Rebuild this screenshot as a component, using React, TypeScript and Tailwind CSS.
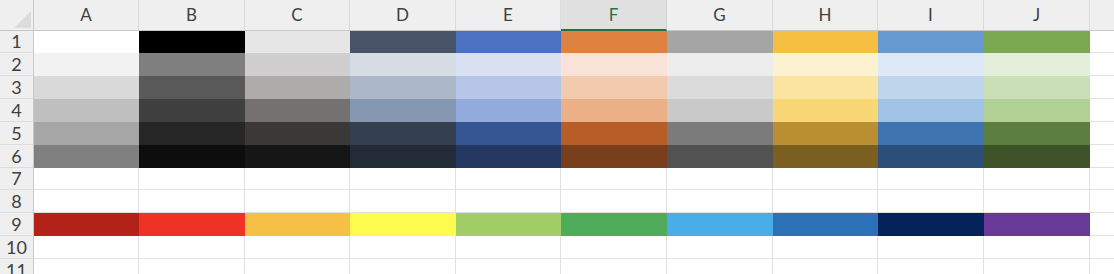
import React from 'react';

const columns = ['A', 'B', 'C', 'D', 'E', 'F', 'G', 'H', 'I', 'J'];
const rowHeights = ['h-[22px]', 'h-[23px]', 'h-[23px]', 'h-[23px]', 'h-[23px]', 'h-[23px]', 'h-[22px]', 'h-[23px]', 'h-[23px]', 'h-[23px]', 'h-[23px]'];

// theme palette, one array per sheet row (null = empty cell)
const palette: (string[] | null)[] = [
    ['#ffffff', '#000000', '#e7e6e6', '#475468', '#4a72c0', '#e0823f', '#a5a5a5', '#f5c042', '#6699d0', '#7aa850'],
    ['#f2f2f2', '#7f7f7f', '#d0cece', '#d6dce4', '#dae1f3', '#f9e3d8', '#ededed', '#fcf1d1', '#dde9f6', '#e3efda'],
    ['#d9d9d9', '#595959', '#aeabab', '#acb8c8', '#b6c6e7', '#f2cbaf', '#dbdbdb', '#fbe3a0', '#bed5ec', '#cbdfb7'],
    ['#bfbfbf', '#404040', '#767171', '#8597b0', '#92aadc', '#ecb088', '#c9c9c9', '#f8d774', '#a0c2e5', '#b1d194'],
    ['#a6a6a6', '#262626', '#3b3838', '#343f50', '#365593', '#b85d27', '#7b7b7b', '#b98f31', '#3f74b0', '#5c7e3e'],
    ['#808080', '#0d0d0d', '#171616', '#232b36', '#243862', '#793f1c', '#525252', '#7a5f20', '#2b4f78', '#3e5328'],
    null,
    null,
    ['#b22218', '#ee3325', '#f6bf45', '#fefb4f', '#a2cd66', '#4eac5b', '#49adea', '#2b71b8', '#05215a', '#683996'],
    null,
    null,
];

const font = { fontFamily: '"Lato", "DejaVu Sans", sans-serif' };

const Corner: React.FC = () => (
    <div className="h-[31px] bg-[#efefef] border-r border-b border-[#c8c8c8]">
        <svg width="33" height="30" viewBox="0 0 33 30">
            <polygon points="31,11 31,28 14,28" fill="#dcdcdc" />
        </svg>
    </div>
);

const ColHeader: React.FC<{ label: string }> = ({ label }) => {
    const selected = label === 'F';
    return (
        <div
            className={
                selected
                    ? 'h-[31px] flex items-end justify-center pb-[2px] bg-[#e1e1e1] border-r border-[#d2d2d2] border-b-2 border-b-[#217346] text-[#217346] text-[17px]'
                    : 'h-[31px] flex items-end justify-center pb-[3px] bg-[#efefef] border-r border-[#dadada] border-b border-b-[#c8c8c8] text-[#404040] text-[17px]'
            }
        >
            {label}
        </div>
    );
};

export default function App() {
    return (
        <div className="w-[1114px] h-[274px] overflow-hidden bg-white" style={font}>
            <div className="grid grid-cols-[34px_105px_106px_105px_106px_105px_106px_106px_105px_106px_106px_1fr]">
                <Corner />
                {columns.map((c) => (
                    <ColHeader key={c} label={c} />
                ))}
                <div className="h-[31px] bg-[#efefef] border-b border-[#c8c8c8]" />

                {rowHeights.map((h, r) => {
                    const fills = palette[r];
                    return (
                        <React.Fragment key={r}>
                            <div
                                className={`${h} flex items-center justify-center bg-[#efefef] border-r border-r-[#c8c8c8] border-b border-b-[#dcdcdc] text-[#404040] text-[18px]`}
                            >
                                {r + 1}
                            </div>
                            {columns.map((c, i) =>
                                fills ? (
                                    <div key={c} className={h} style={{ backgroundColor: fills[i] }} />
                                ) : (
                                    <div key={c} className={`${h} border-r border-b border-[#e1e1e1]`} />
                                ),
                            )}
                            <div className={`${h} border-b border-[#e1e1e1]`} />
                        </React.Fragment>
                    );
                })}
            </div>
        </div>
    );
}
